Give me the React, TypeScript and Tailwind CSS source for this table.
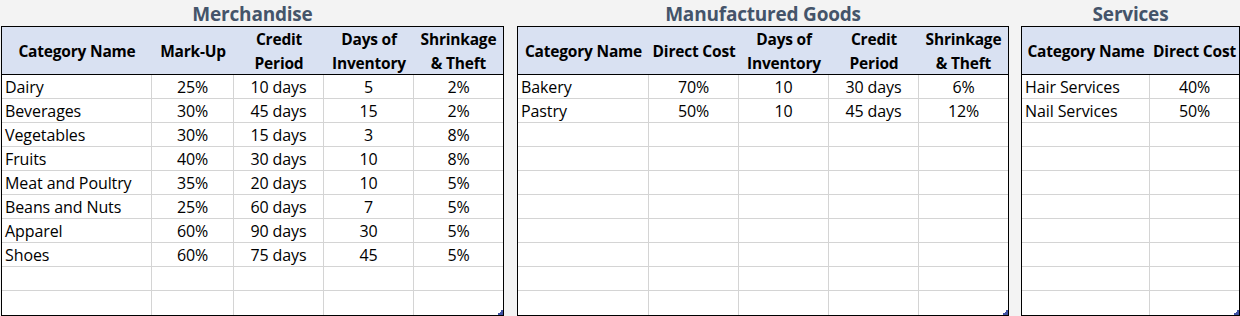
import React from "react";

type Col = { w: string; align: "left" | "center"; head: string[] };

const font = { fontFamily: "'Open Sans', Lato, sans-serif" };

function Corner() {
  return (
    <svg className="absolute right-0 bottom-0" width="5" height="5" viewBox="0 0 5 5">
      <path d="M5 0 V5 H0 V3 H2 V2 H3 V0 Z" fill="#3f51a3" />
    </svg>
  );
}

function Table({
  title,
  width,
  cols,
  rows,
}: {
  title: string;
  width: string;
  cols: Col[];
  rows: string[][];
}) {
  const all = [...rows];
  while (all.length < 10) all.push(cols.map(() => ""));
  return (
    <div className={`flex flex-col ${width}`}>
      <div className="h-[27px] flex items-center justify-center text-[19px] font-bold text-[#44546a] leading-none tracking-[-0.2px] pt-[3px]">
        {title}
      </div>
      <div className="relative border border-black bg-white">
        <div className="flex h-[48px] bg-[#d9e1f2] border-b border-black">
          {cols.map((c, i) => (
            <div
              key={i}
              className={`${c.w} flex flex-col items-center justify-center text-[15.5px] font-bold text-black leading-[24px] tracking-[-0.2px] pt-[1px]`}
            >
              {c.head.map((h, j) => (
                <span key={j} className="whitespace-nowrap">{h}</span>
              ))}
            </div>
          ))}
        </div>
        {all.map((r, ri) => (
          <div
            key={ri}
            className={`flex h-[24px] ${ri < all.length - 1 ? "border-b border-[#d4d4d4]" : ""}`}
          >
            {cols.map((c, ci) => (
              <div
                key={ci}
                className={`${c.w} ${ci < cols.length - 1 ? "border-r border-[#d4d4d4]" : ""} flex items-center text-[16px] text-black leading-none whitespace-nowrap tracking-[-0.1px] pt-[1px] ${
                  c.align === "left" ? "justify-start pl-[3px]" : "justify-center"
                }`}
              >
                {r[ci]}
              </div>
            ))}
          </div>
        ))}
        <Corner />
      </div>
    </div>
  );
}

export default function App() {
  const merch: Col[] = [
    { w: "w-[150px]", align: "left", head: ["Category Name"] },
    { w: "w-[82px]", align: "center", head: ["Mark-Up"] },
    { w: "w-[90px]", align: "center", head: ["Credit", "Period"] },
    { w: "w-[90px]", align: "center", head: ["Days of", "Inventory"] },
    { w: "w-[89px]", align: "center", head: ["Shrinkage", "& Theft"] },
  ];
  const merchRows = [
    ["Dairy", "25%", "10 days", "5", "2%"],
    ["Beverages", "30%", "45 days", "15", "2%"],
    ["Vegetables", "30%", "15 days", "3", "8%"],
    ["Fruits", "40%", "30 days", "10", "8%"],
    ["Meat and Poultry", "35%", "20 days", "10", "5%"],
    ["Beans and Nuts", "25%", "60 days", "7", "5%"],
    ["Apparel", "60%", "90 days", "30", "5%"],
    ["Shoes", "60%", "75 days", "45", "5%"],
  ];
  const manu: Col[] = [
    { w: "w-[131px]", align: "left", head: ["Category Name"] },
    { w: "w-[90px]", align: "center", head: ["Direct Cost"] },
    { w: "w-[90px]", align: "center", head: ["Days of", "Inventory"] },
    { w: "w-[90px]", align: "center", head: ["Credit", "Period"] },
    { w: "w-[89px]", align: "center", head: ["Shrinkage", "& Theft"] },
  ];
  const manuRows = [
    ["Bakery", "70%", "10", "30 days", "6%"],
    ["Pastry", "50%", "10", "45 days", "12%"],
  ];
  const serv: Col[] = [
    { w: "w-[128px]", align: "left", head: ["Category Name"] },
    { w: "w-[89px]", align: "center", head: ["Direct Cost"] },
  ];
  const servRows = [
    ["Hair Services", "40%"],
    ["Nail Services", "50%"],
  ];
  return (
    <div className="w-[1240px] h-[316px] bg-[#f3f3f3] flex pl-[1px] overflow-hidden" style={font}>
      <Table title="Merchandise" width="w-[503px]" cols={merch} rows={merchRows} />
      <div className="w-[13px]" />
      <Table title="Manufactured Goods" width="w-[492px]" cols={manu} rows={manuRows} />
      <div className="w-[12px]" />
      <Table title="Services" width="w-[219px]" cols={serv} rows={servRows} />
    </div>
  );
}
